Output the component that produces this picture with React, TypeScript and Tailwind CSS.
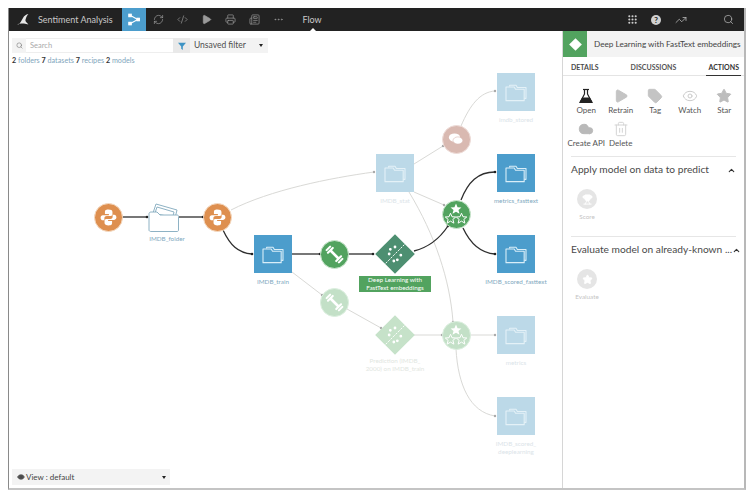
import { ChevronUp, Cloud, CodeXml, Ellipsis, Eye, Grip, Newspaper, Play, Printer, RefreshCw, Search, Star, Tag, Trash2, TrendingUp, Trophy, type LucideIcon } from 'lucide-react';

const font = 'font-["Lato","Noto_Sans",sans-serif]';

const solidEdges = [
  'M122 217H147',
  'M179 217H203',
  'M223 230C230 245 238 253 252 254',
  'M292 254H320',
  'M348 254H373',
  'M414 251C430 247 440 238 448 226',
  'M461 200C468 182 478 172 495 172',
  'M463 228C470 243 480 253 495 254',
];

const fadedEdges = [
  'M231 210C270 190 330 178 374 172',
  'M414 164L443 146',
  'M461 126C470 105 480 92 495 91',
  'M414 192L444 205',
  'M409 192C435 235 450 280 453 322',
  'M292 272L322 295',
  'M347 309L381 328',
  'M414 335H442',
  'M470 335H495',
  'M456 349C458 385 470 412 495 416',
];

const edgeDots = [
  [147, 217], [203, 217], [252, 254], [320, 254], [373, 254], [448, 226], [495, 172], [495, 254],
];

const fadedDots = [
  [374, 172], [443, 146], [495, 91], [444, 205], [453, 322], [322, 295], [381, 328], [442, 335], [495, 335], [495, 416],
];

function FolderGlyph({ className = 'w-[22px] h-[20px]' }: { className?: string }) {
  return (
    <svg viewBox="0 0 24 22" className={className} fill="none" stroke="currentColor" strokeWidth="1.2" strokeLinejoin="round">
      <path d="M5 5V3.500h7l1.500 2.500H23V18h-2" />
      <path d="M1 7.500V20.500h20V8h-9.500L10 5.500H1z" />
    </svg>
  );
}

function PythonGlyph() {
  return (
    <svg viewBox="0 0 24 24" className="w-[19px] h-[19px]" fill="#fff">
      <path d="M11.800 2C8 2 7.500 3.500 7.500 5v2.500h5V9H5C3 9 2 10.500 2 12.200s1 3.300 3 3.300h1.800V13c0-1.800 1.300-2.800 3-2.800h5c1.300 0 2.200-1 2.200-2.200V5c0-2-2-3-5.200-3z" />
      <path d="M12.200 22c3.800 0 4.300-1.500 4.300-3v-2.500h-5V15H19c2 0 3-1.500 3-3.200s-1-3.300-3-3.300h-1.800V11c0 1.800-1.300 2.800-3 2.800h-5c-1.300 0-2.200 1-2.200 2.200v3c0 2 2 3 5.200 3z" />
    </svg>
  );
}

function DumbbellGlyph() {
  return (
    <svg viewBox="0 0 24 24" className="w-[21px] h-[21px]" stroke="#fff" strokeLinecap="round" fill="none">
      <path d="M8 8l8 8" strokeWidth="3" />
      <path d="M7 3l-4 4M10 4.500L4.500 10M17 21l4-4M14 19.500l5.500-5.500" strokeWidth="2.400" />
    </svg>
  );
}

function StarsGlyph() {
  const star = 'M0-4.200L1.200-1.400 4.200-1.200 1.900.700 2.700 3.700 0 2.100-2.700 3.700-1.900.700-4.200-1.200-1.200-1.400z';
  return (
    <svg viewBox="0 0 24 24" className="w-[24px] h-[24px]">
      <path d={star} transform="translate(12 7) scale(1.300)" fill="#fff" />
      <path d={star} transform="translate(6.500 16.500) scale(1.250)" fill="none" stroke="#fff" strokeWidth="0.800" />
      <path d={star} transform="translate(17.500 16.500) scale(1.250)" fill="none" stroke="#fff" strokeWidth="0.800" />
    </svg>
  );
}

function ChatGlyph() {
  return (
    <svg viewBox="0 0 24 24" className="w-[18px] h-[18px]" fill="#fff">
      <ellipse cx="10" cy="10" rx="7.500" ry="5.500" />
      <ellipse cx="14.500" cy="14" rx="6.500" ry="4.800" stroke="#d9b9b1" strokeWidth="0.800" />
    </svg>
  );
}

function DiamondGlyph({ faded }: { faded?: boolean }) {
  return (
    <div className={`w-[28px] h-[28px] rotate-45 flex items-center justify-center ${faded ? 'bg-[#c6e2c9]' : 'bg-[#4d8f71]'}`}>
      <svg viewBox="0 0 24 24" className="w-[28px] h-[28px] -rotate-45" stroke="#fff" fill="#fff">
        <path d="M4 20L20 4" strokeWidth="0.800" strokeDasharray="2 1" fill="none" />
        <circle cx="8" cy="8" r="0.700" />
        <circle cx="12" cy="6" r="0.700" />
        <circle cx="7" cy="12" r="0.700" />
        <circle cx="17" cy="13" r="0.700" />
        <circle cx="14" cy="17" r="0.700" />
        <circle cx="11" cy="18" r="0.700" />
      </svg>
    </div>
  );
}

function Circle({ x, y, color, ring, children }: { x: number; y: number; color: string; ring: string; children: React.ReactNode }) {
  return (
    <div
      className={`absolute w-[29px] h-[29px] -ml-[14.5px] -mt-[14.5px] rounded-full flex items-center justify-center border ${color} ${ring}`}
      style={{ left: x, top: y }}
    >
      {children}
    </div>
  );
}

function Dataset({ x, y, label, faded }: { x: number; y: number; label: string[]; faded?: boolean }) {
  return (
    <div className="absolute w-[80px] -ml-[21px] flex flex-col items-center" style={{ left: x, top: y }}>
      <div className={`w-[38px] h-[38px] flex items-center justify-center ${faded ? 'bg-[#bcd9e8] text-[#e4f1f7]' : 'bg-[#4c9dcc] text-[#d9eef8]'}`}>
        <FolderGlyph />
      </div>
      <div className={`mt-[5px] text-[6.300px] leading-[8px] text-center whitespace-nowrap ${faded ? 'text-[#dbe4e9]' : 'text-[#7fa9c0]'}`}>
        {label.map((l) => <div key={l}>{l}</div>)}
      </div>
    </div>
  );
}

function FlowCanvas() {
  return (
    <div className="absolute left-0 top-0 w-[753px] h-[497px] pointer-events-none">
      <svg width="753" height="497" className="absolute left-0 top-0" fill="none">
        {fadedEdges.map((d) => <path key={d} d={d} stroke="#d9d9d6" strokeWidth="1" />)}
        {solidEdges.map((d) => <path key={d} d={d} stroke="#2e2e2e" strokeWidth="1.300" />)}
        {fadedDots.map(([x, y]) => <circle key={`${x}-${y}`} cx={x} cy={y} r="1.200" fill="#a9a9a9" />)}
        {edgeDots.map(([x, y]) => <circle key={`${x}-${y}`} cx={x} cy={y} r="1.300" fill="#222" />)}
      </svg>

      <Circle x={108} y={217} color="bg-[#de8f4f]" ring="border-[#f5dcc5]"><PythonGlyph /></Circle>
      <Circle x={217} y={217} color="bg-[#de8f4f]" ring="border-[#f5dcc5]"><PythonGlyph /></Circle>

      <div className="absolute left-[147px] top-[201px] w-[33px] h-[33px] text-[#8eb2c4]">
        <svg viewBox="0 0 33 33" className="w-[33px] h-[33px]" fill="#fff" stroke="currentColor" strokeWidth="1">
          <path d="M6 12L9 3l21 6-2 8z" />
          <path d="M8 12L10 6l17 5-1 4" fill="none" />
          <path d="M2 13c0-1 .5-2 2-2h6l3 3h17c1 0 1.500 .5 1.500 1.500V29c0 1-.5 1.500-1.500 1.500H4c-1 0-2-.5-2-1.500z" />
        </svg>
      </div>
      <div className="absolute left-[137px] top-[235px] w-[60px] text-center text-[6.300px] leading-[8px] text-[#7fa9c0]">IMDB_folder</div>

      <Dataset x={254} y={235} label={['IMDB_train']} />
      <Dataset x={376} y={154} label={['IMDB_stat']} faded />
      <Dataset x={497} y={73} label={['imdb_stored']} faded />
      <Dataset x={497} y={154} label={['metrics_fasttext']} />
      <Dataset x={497} y={235} label={['IMDB_scored_fasttext']} />
      <Dataset x={497} y={316} label={['metrics']} faded />
      <Dataset x={497} y={397} label={['IMDB_scored_', 'deeplearning']} faded />

      <Circle x={334} y={254} color="bg-[#52a35f]" ring="border-[#cfe8d2]"><DumbbellGlyph /></Circle>
      <Circle x={334} y={302} color="bg-[#c3e0c7]" ring="border-[#dcefdf]"><DumbbellGlyph /></Circle>
      <Circle x={456} y={214} color="bg-[#52a35f]" ring="border-[#cfe8d2]"><StarsGlyph /></Circle>
      <Circle x={456} y={335} color="bg-[#c3e0c7]" ring="border-[#dcefdf]"><StarsGlyph /></Circle>
      <Circle x={456} y={139} color="bg-[#d9b9b1]" ring="border-[#eedcd8]"><ChatGlyph /></Circle>

      <div className="absolute left-[381px] top-[240px]"><DiamondGlyph /></div>
      <div className="absolute left-[381px] top-[321px]"><DiamondGlyph faded /></div>

      <div className="absolute left-[359px] top-[276px] w-[72px] h-[16px] bg-[#52a35f] text-white text-[6.300px] leading-[8px] text-center flex items-center justify-center">
        Deep Learning with<br />FastText embeddings
      </div>
      <div className="absolute left-[355px] top-[357px] w-[80px] text-[#dfe6e1] text-[6.300px] leading-[8px] text-center">
        Prediction (IMDB_<br />2000) on IMDB_train
      </div>
    </div>
  );
}

const navIcons: LucideIcon[] = [RefreshCw, CodeXml, Play, Printer, Newspaper, Ellipsis];

function TopBar() {
  return (
    <div className="h-[23px] bg-[#222222] flex items-center text-[#c9c9c9]">
      <div className="w-[28px] flex justify-center">
        <svg viewBox="0 0 24 24" className="w-[14px] h-[13px]" fill="#e8e8e8">
          <path d="M2 22C7 19 9 14 12 9c2-3 5-6 10-7-3 3-4 6-5 9-1 2-1 5 3 8l2 2-6-1c-3-1-7-1-10 0-2 0-4 1-4 2z" />
        </svg>
      </div>
      <span className="text-[9px] ml-[1px] w-[84px] text-[#c8c8c8] whitespace-nowrap">Sentiment Analysis</span>
      <div className="w-[24px] h-[23px] bg-[#4c9dcc] flex items-center justify-center">
        <svg viewBox="0 0 16 16" className="w-[13px] h-[13px]" fill="none" stroke="#fff" strokeWidth="1.400">
          <path d="M3 3l9 5-9 5" />
          <rect x="1" y="1.500" width="3" height="3" fill="#fff" />
          <rect x="1" y="11.500" width="3" height="3" fill="#fff" />
          <rect x="11" y="6.500" width="3" height="3" fill="#fff" />
        </svg>
      </div>
      {navIcons.map((Icon, i) => (
        <div key={i} className="w-[24px] flex justify-center">
          <Icon className="w-[11px] h-[11px] text-[#9a9a9a]" strokeWidth={1.500} fill={Icon === Play ? '#9a9a9a' : 'none'} />
        </div>
      ))}
      <div className="relative ml-[10px] w-[24px] h-[23px] flex items-center justify-center text-[9px] text-[#c9c9c9]">
        Flow
        <div className="absolute bottom-0 left-[10px] w-0 h-0 border-x-[3px] border-x-transparent border-b-[3px] border-b-white" />
      </div>
      <div className="ml-auto flex items-center">
        <Grip className="w-[11px] h-[11px] text-[#d0d0d0]" strokeWidth={2.500} />
        <div className="ml-[13px] w-[10px] h-[10px] rounded-full bg-[#d0d0d0] text-[#222] text-[8px] leading-[10px] text-center font-bold">?</div>
        <TrendingUp className="ml-[14px] w-[12px] h-[12px] text-[#c0c0c0]" strokeWidth={1.500} />
        <Search className="ml-[36px] mr-[10px] w-[11px] h-[11px] text-[#c0c0c0]" strokeWidth={1.500} />
      </div>
    </div>
  );
}

function FilterRow() {
  return (
    <div className="ml-[3px] mt-[7px] w-[256px] h-[15px] flex bg-[#f3f3f3] text-[7.500px]">
      <div className="w-[14px] flex items-center justify-center">
        <Search className="w-[7px] h-[7px] text-[#777]" strokeWidth={2} />
      </div>
      <div className="w-[147px] bg-white border-y border-[#eeeeee] flex items-center pl-[4px] text-[#aaaaaa]">Search</div>
      <div className="w-[17px] bg-[#e9e9e9] flex items-center justify-center">
        <svg viewBox="0 0 10 10" className="w-[8px] h-[8px]" fill="#3d93c4"><path d="M0 1h10L6 5.500V10L4 8.500V5.500z" /></svg>
      </div>
      <div className="flex-1 flex items-center justify-between pl-[4px] pr-[5px] text-[#4d4d4d] text-[8.500px]">
        Unsaved filter
        <div className="w-0 h-0 border-x-[2.500px] border-x-transparent border-t-[3px] border-t-[#222]" />
      </div>
    </div>
  );
}

function FlaskGlyph() {
  return (
    <svg viewBox="0 0 16 16" className="w-[16px] h-[16px]" fill="#222" stroke="#222" strokeWidth="1.200" strokeLinejoin="round">
      <path d="M5 1.500h6" fill="none" />
      <path d="M6.500 1.500V6L2 14.500h12L9.500 6V1.500" fill="none" />
      <path d="M4.500 10h7l2.500 4.500H2z" />
    </svg>
  );
}

function ActionItem({ Icon, label, tone, fill }: { Icon: LucideIcon | null; label: string; tone?: string; fill?: string }) {
  return (
    <div className="flex flex-col items-center w-[34.5px]">
      {Icon ? <Icon className={`w-[16px] h-[16px] ${tone}`} fill={fill ?? 'none'} strokeWidth={1.500} /> : <FlaskGlyph />}
      <span className="mt-[1px] text-[8px] leading-[11px] text-[#555] whitespace-nowrap">{label}</span>
    </div>
  );
}

function Section({ title, action, Icon }: { title: string; action: string; Icon: LucideIcon }) {
  return (
    <div className="mx-[8px]">
      <div className="border-t border-[#e6e6e6] flex items-center justify-between h-[27px]">
        <span className="text-[10.200px] text-[#4a4a4a] whitespace-nowrap">{title}</span>
        <ChevronUp className="w-[9px] h-[9px] text-[#333] shrink-0" strokeWidth={3} />
      </div>
      <div className="mt-[6px] w-[30px] ml-[1px] flex flex-col items-center">
        <div className="w-[20px] h-[20px] rounded-full bg-[#e5e5e5] flex items-center justify-center">
          <Icon className="w-[11px] h-[11px] text-white" fill="#fff" />
        </div>
        <span className="mt-[4px] text-[6.300px] leading-[8px] text-[#c4c4c4]">{action}</span>
      </div>
    </div>
  );
}

function SidePanel() {
  return (
    <div className="w-[182px] shrink-0 border-l border-[#d6d6d6] bg-white h-full">
      <div className="h-[26px] bg-[#f3f3f3] flex items-center">
        <div className="w-[24px] h-[26px] shrink-0 bg-[#52a35f] flex items-center justify-center">
          <div className="w-[9px] h-[9px] bg-white rotate-45" />
        </div>
        <span className="ml-[7px] text-[8.200px] text-[#444] whitespace-nowrap">Deep Learning with FastText embeddings</span>
      </div>
      <div className="h-[19px] pt-[2px] flex items-center justify-between pl-[8px] pr-[5px] border-b border-[#e4e4e4] text-[7px] font-bold text-[#4a4a4a]">
        <span>DETAILS</span>
        <span className="text-[#555]">DISCUSSIONS</span>
        <span className="relative text-[#333]">ACTIONS
          <span className="absolute left-[-2px] right-[-2px] -bottom-[4px] h-[1.500px] bg-[#333]" />
        </span>
      </div>
      <div className="pt-[12px] pl-[6px] flex">
        <ActionItem Icon={null} label="Open" />
        <ActionItem Icon={Play} label="Retrain" tone="text-[#c4c4c4]" fill="#c4c4c4" />
        <ActionItem Icon={Tag} label="Tag" tone="text-[#c4c4c4]" fill="#c4c4c4" />
        <ActionItem Icon={Eye} label="Watch" tone="text-[#cccccc]" />
        <ActionItem Icon={Star} label="Star" tone="text-[#bdbdbd]" fill="#bdbdbd" />
      </div>
      <div className="pt-[5px] pl-[6px] flex">
        <ActionItem Icon={Cloud} label="Create API" tone="text-[#b9b9b9]" fill="#b9b9b9" />
        <ActionItem Icon={Trash2} label="Delete" tone="text-[#d4d4d4]" />
      </div>
      <div className="h-[7px]" />
      <Section title="Apply model on data to predict" action="Score" Icon={Trophy} />
      <div className="h-[15px]" />
      <Section title="Evaluate model on already-known ..." action="Evaluate" Icon={Star} />
    </div>
  );
}

export default function App() {
  return (
    <div className={`relative w-[753px] h-[497px] bg-white overflow-hidden ${font}`}>
      <div className="absolute left-[8px] top-[8px] w-[738px] h-[482px] flex flex-col border-l border-l-[#8a8a8a] border-r-2 border-r-[#b8b8b8] border-b-2 border-b-[#c4c4c4]">
        <TopBar />
        <div className="flex-1 flex min-h-0">
          <div className="flex-1 flex flex-col justify-between">
            <div>
              <FilterRow />
              <div className="ml-[3px] mt-[3px] text-[7.200px] leading-[10px] text-[#7fa6bd]">
                <b className="text-[#333]">2</b> folders <b className="text-[#333]">7</b> datasets <b className="text-[#333]">7</b> recipes <b className="text-[#333]">2</b> models
              </div>
            </div>
            <div className="ml-[3px] mb-[3px] w-[158px] h-[16px] bg-[#f3f3f3] flex items-center justify-between pl-[5px] pr-[4px] text-[8px] text-[#444]">
              <span className="flex items-center gap-[1px]"><Eye className="w-[8px] h-[8px]" fill="#555" />View : default</span>
              <div className="w-0 h-0 border-x-[2.500px] border-x-transparent border-t-[3px] border-t-[#222]" />
            </div>
          </div>
          <SidePanel />
        </div>
      </div>
      <FlowCanvas />
    </div>
  );
}
